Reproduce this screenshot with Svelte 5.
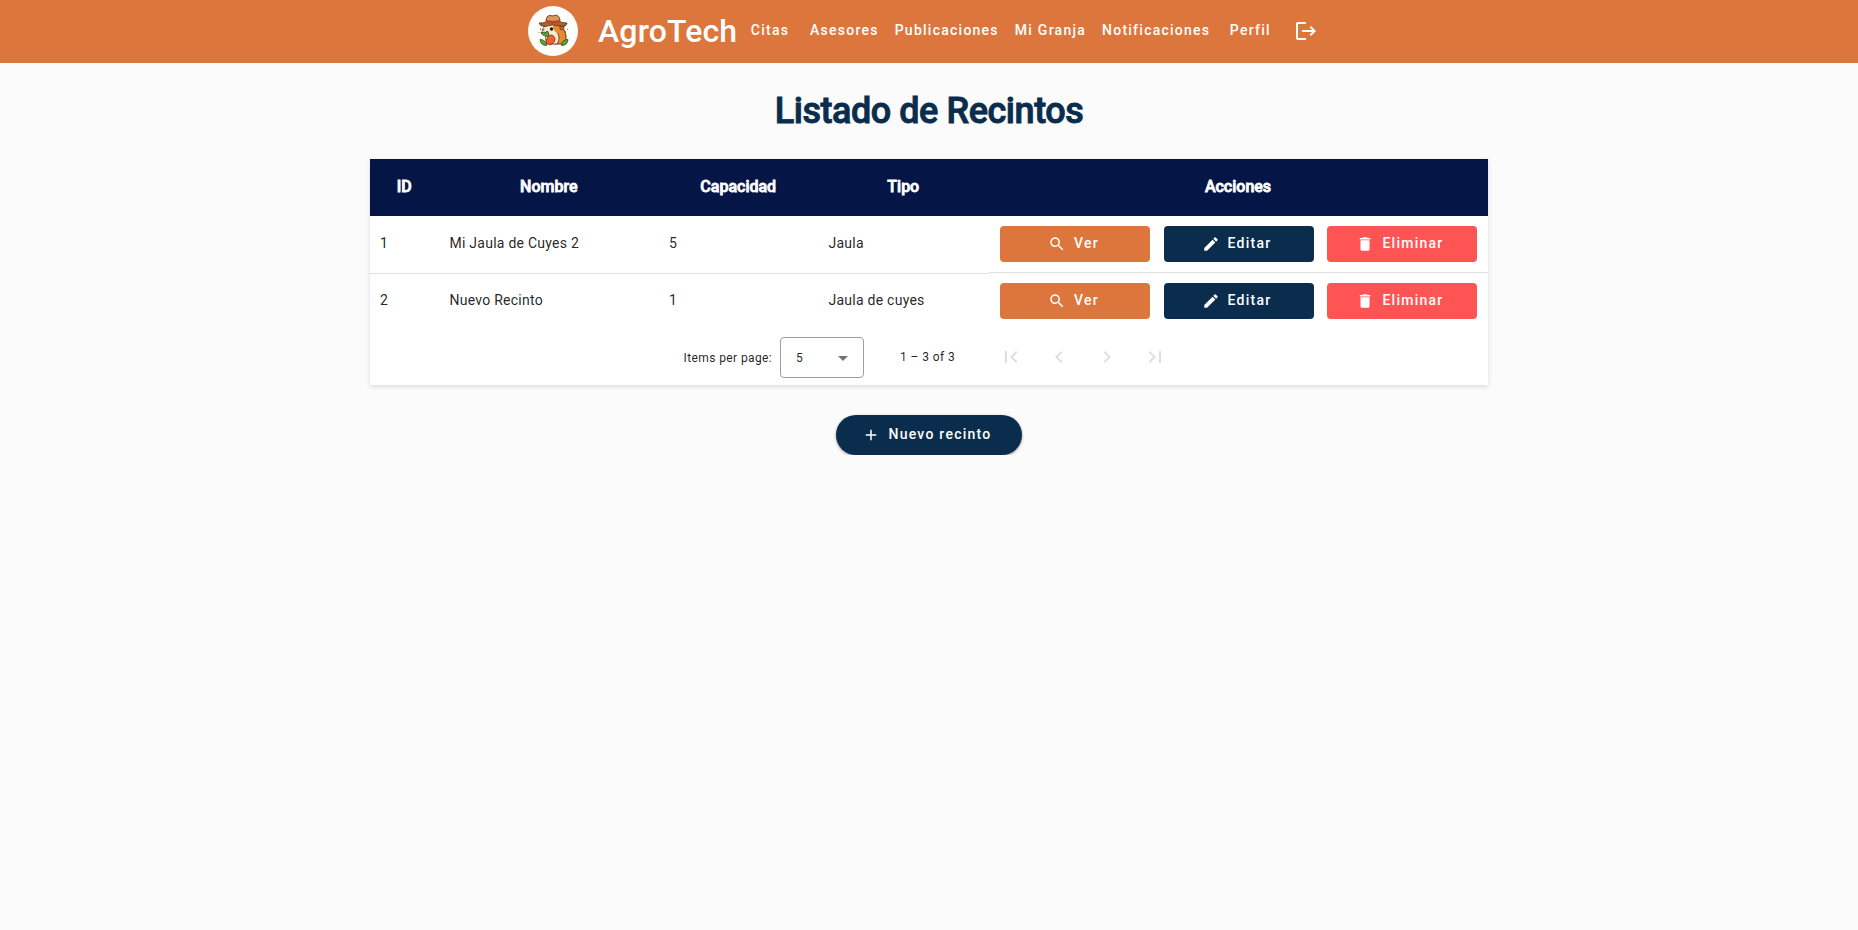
<script>
  const links = ['Citas', 'Asesores', 'Publicaciones', 'Mi Granja', 'Notificaciones', 'Perfil'];
  const columns = ['ID', 'Nombre', 'Capacidad', 'Tipo', 'Acciones'];
  const rows = [
    { id: 1, name: 'Mi Jaula de Cuyes 2', capacity: 5, type: 'Jaula' },
    { id: 2, name: 'Nuevo Recinto', capacity: 1, type: 'Jaula de cuyes' }
  ];
  const actions = [
    { label: 'Ver', kind: 'view', icon: 'M15.5 14h-.79l-.28-.27C15.41 12.59 16 11.11 16 9.5 16 5.91 13.09 3 9.5 3S3 5.91 3 9.5 5.91 16 9.5 16c1.61 0 3.09-.59 4.23-1.57l.27.28v.79l5 4.99L20.49 19l-4.99-5zm-6 0C7.01 14 5 11.99 5 9.5S7.01 5 9.5 5 14 7.01 14 9.5 11.99 14 9.5 14z' },
    { label: 'Editar', kind: 'edit', icon: 'M3 17.25V21h3.75L17.81 9.94l-3.75-3.75L3 17.25zM20.71 7.04c.39-.39.39-1.02 0-1.41l-2.34-2.34c-.39-.39-1.02-.39-1.41 0l-1.83 1.83 3.75 3.75 1.83-1.83z' },
    { label: 'Eliminar', kind: 'delete', icon: 'M6 19c0 1.1.9 2 2 2h8c1.1 0 2-.9 2-2V7H6v12zM19 4h-3.5l-1-1h-5l-1 1H5v2h14V4z' }
  ];
  const pages = [
    { label: 'First page', icon: 'M18.41 16.59L13.82 12l4.59-4.59L17 6l-6 6 6 6zM6 6h2v12H6z' },
    { label: 'Previous page', icon: 'M15.41 7.41L14 6l-6 6 6 6 1.41-1.41L10.83 12z' },
    { label: 'Next page', icon: 'M10 6L8.59 7.41 13.17 12l-4.58 4.59L10 18l6-6z' },
    { label: 'Last page', icon: 'M5.59 7.41L10.18 12l-4.59 4.59L7 18l6-6-6-6zM16 6h2v12h-2z' }
  ];
</script>

<header>
  <span class="avatar">
    <svg width="50" height="50" viewBox="0 0 50 50">
      <path d="M27 18 Q34 17 36 24 Q40 31 36.500 38 H26Z" fill="#e88b30" stroke="#4b2b1c" stroke-width=".9" />
      <path d="M17 20 Q20 16 27 18 Q31 22 29 26 Q33 32 29 38 H21 Q16 34 18 29 Q13 28 14.500 23Z" fill="#fbead2" stroke="#4b2b1c" stroke-width=".7" />
      <path d="M25 18 Q32 17 33 23 Q33 27 29 27 Q24 24 25 18Z" fill="#e88b30" />
      <path d="M32 19.500 q4.500 -1 4 3 q-2 3 -4 .5z" fill="#c86a35" stroke="#4b2b1c" stroke-width=".6" />
      <circle cx="23.500" cy="23" r="1.700" fill="#24130f" />
      <path d="M14.300 23.500 l2.500 -.5 -1.500 2z" fill="#8b4136" />
      <path d="M16 26 q2 1.500 4 0" fill="none" stroke="#6b3728" stroke-width=".8" />
      <path d="M11 17 Q17 17.500 19 15 H31 Q33 17 39 17 Q38 21.500 32 20 Q25 17.500 17 20.500 Q12 20.500 11 17Z" fill="#a5672d" stroke="#4b2b1c" stroke-width=".8" />
      <path d="M18 15.500 Q18 9.500 22 9.500 Q25 10.500 28 9 Q32 10 32 15.500 Q25 18 18 15.500Z" fill="#d69a55" stroke="#4b2b1c" stroke-width=".8" />
      <path d="M18 13.500 Q25 16 32 13.500 V16.500 Q25 18.500 18 16.500Z" fill="#c5402d" />
      <path d="M20 31 Q21 28 25 29.500 Q29 33 25 37.500 Q21 40 18.500 37.500 Q17 34 20 31Z" fill="#f06027" stroke="#702f1d" stroke-width=".8" />
      <path d="M20 30.500 q-6 -.5 -7 -4 q3 -.5 4.500 1 q.5 -3 2.500 -2 q1.500 2.500 0 5M12 33.500 q6 0 6.500 6 q-6 0 -6.500 -6M40 33.500 q-6 0 -6.500 6 q6 0 6.500 -6" fill="#56a936" stroke="#24521f" stroke-width=".8" />
      <path d="M12.500 22v2M37.500 25v2M39.500 23v1M11 26v1" stroke="#6b4a38" stroke-width=".7" />
    </svg>
  </span>
  <span class="brand">AgroTech</span>
  <nav>
    {#each links as link}<a href="#top">{link}</a>{/each}
  </nav>
  <svg class="logout" width="24" height="24" viewBox="0 0 24 24"><path d="M17 7l-1.410 1.410L18.170 11H8v2h10.170l-2.580 2.580L17 17l5-5zM4 5h8V3H4c-1.100 0-2 .9-2 2v14c0 1.100.9 2 2 2h8v-2H4V5z" /></svg>
</header>

<main>
  <h1>Listado de Recintos</h1>
  <section class="card">
    <div class="row head">
      {#each columns as column}<div class="cell">{column}</div>{/each}
    </div>
    {#each rows as row}
      <div class="row body">
        <div class="cell">{row.id}</div>
        <div class="cell">{row.name}</div>
        <div class="cell">{row.capacity}</div>
        <div class="cell">{row.type}</div>
        <div class="cell actions">
          {#each actions as action}
            <button class="btn {action.kind}"><svg width="18" height="18" viewBox="0 0 24 24"><path d={action.icon} /></svg><span>{action.label}</span></button>
          {/each}
        </div>
      </div>
    {/each}
    <div class="paginator">
      <span class="per">Items per page:</span>
      <div class="select"><span>5</span><svg width="10" height="5" viewBox="0 0 10 5"><path d="M0 0h10L5 5z" /></svg></div>
      <span class="range">1 – 3 of 3</span>
      {#each pages as page}
        <button class="page" aria-label={page.label}><svg width="24" height="24" viewBox="0 0 24 24"><path d={page.icon} /></svg></button>
      {/each}
    </div>
  </section>
  <button class="new"><svg width="18" height="18" viewBox="0 0 24 24"><path d="M19 13h-6v6h-2v-6H5v-2h6V5h2v6h6v2z" /></svg><span>Nuevo recinto</span></button>
</main>

<style>
  :global(body) { background: #fbfbfb; font-family: Roboto, sans-serif; color: rgba(0, 0, 0, .87); }
  * { box-sizing: border-box; }
  svg { display: block; flex: none; fill: currentColor; }
  button { border: 0; padding: 0; font-family: inherit; display: flex; align-items: center; justify-content: center; }
  header { height: 63px; background: #dd763c; color: #fff; display: flex; align-items: center; padding-left: 528px; }
  .avatar { width: 50px; height: 50px; border-radius: 50%; background: #fffefc; overflow: hidden; margin-bottom: 1px; }
  .brand { width: 140px; margin: 0 0 2px 20px; font-size: 32px; font-weight: 500; letter-spacing: .15px; line-height: 40px; white-space: nowrap; }
  nav { display: flex; margin-bottom: 3px; }
  nav a { min-width: 64px; padding: 0 8px; text-align: center; color: #fff; text-decoration: none; font-size: 14px; font-weight: 500; letter-spacing: 1.25px; line-height: 36px; white-space: nowrap; }
  .logout { margin: 0 0 2px 12px; }
  main { display: flex; flex-direction: column; align-items: center; }
  h1 { margin: 26px 0; height: 44px; line-height: 44px; font-size: 36px; font-weight: 500; letter-spacing: -.45px; -webkit-text-stroke: .9px currentColor; color: #0a2d4d; }
  .card { width: 1118px; height: 226px; background: #fff; box-shadow: 0 2px 4px rgba(0, 0, 0, .1), 0 0 8px rgba(0, 0, 0, .04); }
  .row { display: grid; grid-template-columns: 69.5px 219.500px 159.500px 170.500px 499px; height: 57px; }
  .cell { display: flex; align-items: center; padding: 0 10px; }
  .head { background: #051545; color: #fff; }
  .head .cell { justify-content: center; font-size: 16px; font-weight: 500; -webkit-text-stroke: .8px currentColor; padding: 0 11px 2px 10px; }
  .body .cell { font-size: 14px; letter-spacing: .25px; padding-bottom: 4px; }
  .body:nth-child(2) .cell { box-shadow: 0 1px #e0e0e0; }
  .body .actions { gap: 13.500px; padding: 0 11px 1px; }
  .body:nth-child(2) .actions { box-shadow: inset 0 -1px #e0e0e0; }
  .btn { width: 150px; height: 36px; border-radius: 4px; color: #fff; font-size: 14px; font-weight: 500; letter-spacing: 1.25px; }
  .btn svg, .new svg { margin: 0 8px 0 -4px; }
  .view svg { margin: 0 8px 0 -3px; }
  .btn span, .new span { margin-bottom: 2px; }
  .view { background: #dd763c; }
  .edit { background: #0a2d4d; }
  .delete { background: #ff5454; }
  .paginator { display: flex; align-items: center; height: 55px; padding: 0 0 1px 313.500px; font-size: 12px; letter-spacing: .4px; }
  .per { width: 96.500px; padding-top: 1px; white-space: nowrap; }
  .select { width: 84px; height: 41px; border: 1px solid #9e9e9e; border-radius: 4px; display: flex; align-items: center; justify-content: space-between; padding: 0 15px; }
  .select span { padding-top: 1px; }
  .select svg { color: #757575; margin-top: 2px; }
  .range { width: 123px; padding: 0 0 1px 36px; white-space: nowrap; }
  .page { width: 48px; height: 48px; background: none; color: #dedede; }
  .new { margin-top: 30px; width: 186px; height: 40px; border-radius: 20px; background: #0a2d4d; color: #fff; font-size: 14px; font-weight: 500; letter-spacing: 1.25px; box-shadow: 0 1px 3px rgba(0, 0, 0, .4); }
</style>
